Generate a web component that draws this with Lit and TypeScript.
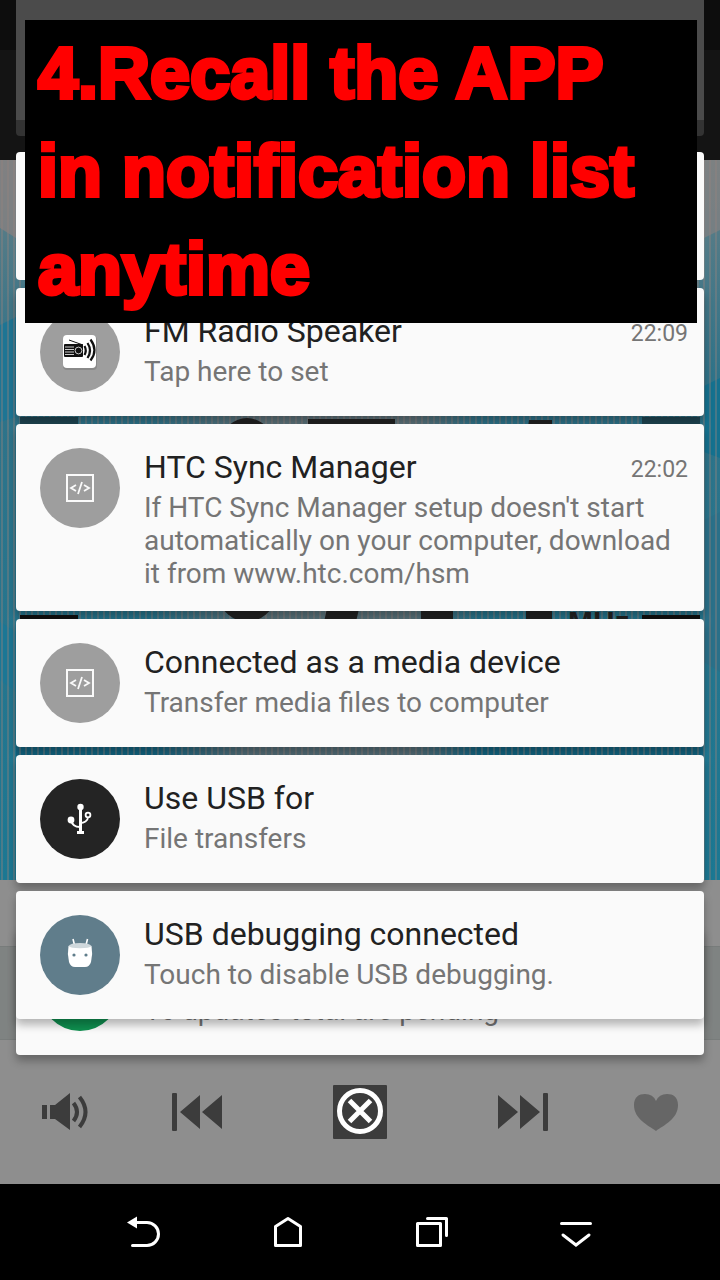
import { LitElement, html, svg, css, nothing } from "lit";
import { customElement, property } from "lit/decorators.js";

const icons: Record<string, unknown> = {
  radio: svg`
    <rect x="23" y="24" width="34" height="34" rx="4" fill="#7d7d7d" opacity=".6"/>
    <rect x="23" y="23" width="33" height="33" rx="4" fill="#fff"/>
    <path d="M29 28l14 5" stroke="#111" stroke-width="1"/>
    <rect x="24" y="32" width="19" height="13" rx="1" fill="#111"/>
    <path d="M25 35h9M25 37.500h9M25 40h9M25 42.500h9" stroke="#ccc" stroke-width="1.200"/>
    <circle cx="38.500" cy="38.500" r="3.400" fill="#111" stroke="#ddd" stroke-width=".9"/>
    <path d="M44.500 34q2.500 4.500 0 9M47.500 31q5 7.500 0 15M50.500 27.500q8 11 0 21" fill="none" stroke="#111" stroke-width="2.200"/>`,
  code: svg`
    <rect x="27" y="27" width="26" height="26" fill="none" stroke="#fafafa" stroke-width="2"/>
    <path d="M36 37l-5 3 5 3M44 37l5 3-5 3M42 34l-4 12" fill="none" stroke="#fafafa" stroke-width="1.800"/>`,
  usb: svg`
    <circle cx="40.500" cy="28" r="3.200" fill="#fff"/>
    <circle cx="31" cy="41" r="3.400" fill="#fff"/>
    <circle cx="48" cy="36" r="2.400" fill="none" stroke="#fff" stroke-width="1.800"/>
    <path d="M40.500 28v26M37 53.500h7" stroke="#fff" stroke-width="3"/>
    <path d="M31 41c1 5 5 7 9 7M48 38c0 4-4 6-8 6" fill="none" stroke="#fff" stroke-width="1.800"/>`,
  android: svg`
    <path d="M33 24l1.500 6M47.500 24l-1.500 6" stroke="#fff" stroke-width="1.600"/>
    <path d="M28.500 31h23q1.500 8-.5 16-1.500 5-6 5H35q-4.500 0-6-5-2-8-.5-16z" fill="#fff"/>
    <path d="M28.500 31q2-3 11.500-3t11.500 3q-2 2.200-11.500 2.200T28.500 31z" fill="#cfd8dc"/>
    <circle cx="34" cy="40" r="1.600" fill="#607d8b"/><circle cx="46" cy="40" r="1.600" fill="#607d8b"/>`,
  update: nothing,
};

@customElement("notice-card")
class NoticeCard extends LitElement {
  @property() icon = "";
  @property() tone = "grey";
  @property() heading = "";
  @property() text = "";
  @property() time = "";

  static styles = css`
    :host { display: block; }
    .card {
      display: flex; gap: 24px; box-sizing: border-box; min-height: 128px;
      padding: 24px 16px 21px 24px; border-radius: 4px; background: #fafafa;
      box-shadow: 0 6px 8px rgba(0, 0, 0, 0.28);
    }
    .badge { flex: none; width: 80px; height: 80px; border-radius: 50%; }
    .grey { background: #9e9e9e; }
    .dark { background: #242424; }
    .slate { background: #607d8b; }
    .green { background: #0f9050; }
    svg { display: block; }
    .body { flex: 1; min-width: 0; }
    .top { display: flex; align-items: center; gap: 16px; height: 38px; margin-bottom: 5px; }
    h2 { flex: 1; margin: 0; font-size: 32px; line-height: 38px; font-weight: 400; color: #212121; }
    time { font-size: 23px; line-height: 38px; padding-top: 6px; color: #757575; }
    p { margin: 0; font-size: 28px; line-height: 33px; color: #757575; }
  `;

  render() {
    return html`<article class="card">
      <div class="badge ${this.tone}">
        <svg width="80" height="80" viewBox="0 0 80 80" aria-hidden="true">${icons[this.icon]}</svg>
      </div>
      <div class="body">
        <div class="top">
          <h2>${this.heading}</h2>
          ${this.time ? html`<time>${this.time}</time>` : nothing}
        </div>
        <p>${this.text}</p>
      </div>
    </article>`;
  }
}

const notices = [
  { icon: "radio", tone: "grey", heading: "FM Radio Speaker", text: "Tap here to set", time: "22:09" },
  { icon: "code", tone: "grey", heading: "HTC Sync Manager", text: "If HTC Sync Manager setup doesn't start automatically on your computer, download it from www.htc.com/hsm", time: "22:02" },
  { icon: "code", tone: "grey", heading: "Connected as a media device", text: "Transfer media files to computer", time: "" },
  { icon: "usb", tone: "dark", heading: "Use USB for", text: "File transfers", time: "" },
  { icon: "android", tone: "slate", heading: "USB debugging connected", text: "Touch to disable USB debugging.", time: "" },
];

@customElement("app-root")
class AppRoot extends LitElement {
  static styles = css`
    :host {
      display: block; position: relative; min-height: 100vh; overflow: hidden;
      background: #000; font-family: Roboto, "Noto Sans", sans-serif;
    }
    .screen { display: flex; flex-direction: column; min-height: 100vh; }
    .status { height: 50px; background: #0d0d0d; }
    .toolbar { height: 110px; background: #141414; }
    .dial { flex: 1; min-height: 720px; overflow: hidden; background: #22718b; }
    .dial svg { display: block; width: 100%; height: 720px; }
    .mhz { font: 700 30px "Liberation Sans Narrow", "Liberation Sans", sans-serif; }
    .strip { height: 66px; background: #8e8e8e; }
    .station { height: 92px; background: #7f8382; border: solid #787c7b; border-width: 1px 0; }
    .controls {
      display: flex; justify-content: space-between; align-items: center;
      height: 144px; padding: 0 40px; background: #8e8e8e;
    }
    .transport { display: flex; gap: 109px; }
    button { display: block; padding: 0; border: 0; background: none; }
    button svg { display: block; }
    .nav {
      display: flex; justify-content: center; align-items: center; gap: 96px;
      box-sizing: border-box; height: 96px; padding-bottom: 4px; background: #000;
    }
    .shade { position: absolute; inset: 0 0 auto; padding: 0 16px; }
    .quick {
      height: 120px; margin-bottom: 16px; border-radius: 0 0 4px 4px;
      background: #4b4b4b; border-bottom: 16px solid #333;
    }
    .list { display: grid; gap: 8px; }
    .blank { height: 128px; border-radius: 4px; background: #fafafa; }
    .stack { position: relative; z-index: 1; }
    .last { margin-top: -100px; }
    .caption {
      position: absolute; z-index: 2; top: 20px; left: 25px; right: 23px; box-sizing: border-box;
      height: 303px; margin: 0; padding: 4px 13px 0; background: #000; color: #f00;
      font: 700 72px/98px "Liberation Sans", Arial, sans-serif;
      -webkit-text-stroke: 4px #f00;
    }
  `;

  dial() {
    return html`<svg viewBox="0 0 720 720" preserveAspectRatio="none" aria-hidden="true">
      <defs>
        <linearGradient id="sea" x1="0" y1="0" x2="0" y2="1">
          <stop offset="0" stop-color="#667f86"/><stop offset=".3" stop-color="#2f7389"/>
          <stop offset="1" stop-color="#1b7893"/>
        </linearGradient>
        <linearGradient id="warm" x1="0" y1="0" x2="1" y2="0">
          <stop offset="0" stop-color="#6f7173" stop-opacity="0"/><stop offset=".3" stop-color="#6f7173"/>
          <stop offset=".8" stop-color="#6f7173"/><stop offset="1" stop-color="#6f7173" stop-opacity="0"/>
        </linearGradient>
        <pattern id="lines" width="6" height="6" patternUnits="userSpaceOnUse">
          <rect x="1" width="2" height="6" fill="#94837d" opacity=".4"/>
        </pattern>
      </defs>
      <rect width="720" height="720" fill="url(#sea)"/>
      <path d="M0 0h16v78L0 68z" fill="#8c8280" opacity=".7"/>
      <path d="M704 0h16v70l-16 8z" fill="#8c8280" opacity=".6"/>
      <path d="M0 165l16-8v100L0 262z" fill="#1d7594"/>
      <path d="M704 226l16-8v80l-16-6z" fill="#14718f"/>
      <path d="M0 462l16 10v60L0 520z" fill="#1b7795"/>
      <path d="M704 360l16-8v160l-16-10z" fill="#2a7089"/>
      <rect x="16" y="584" width="688" height="12" fill="#126582"/>
      <rect x="150" y="250" width="330" height="350" fill="url(#warm)" opacity=".7"/>
      <rect width="720" height="720" fill="url(#lines)"/>
      <path d="M20 257h58v8H20zM642 257h58v8h-58z" fill="#1f4653"/>
      <path d="M20 455h58v5H20zM642 455h58v5h-58z" fill="#111"/>
      <ellipse cx="247" cy="360" rx="50" ry="102" fill="#222"/>
      <path d="M308 259h87v30l-39 173h-32l37-170h-53zM421 430h32v30h-32zM529 260h23v200h-26V280z" fill="#222"/>
      <text class="mhz" x="568" y="472" fill="#222">MHz</text>
    </svg>`;
  }

  render() {
    return html`
      <main class="screen">
        <div class="status"></div>
        <div class="toolbar"></div>
        <div class="dial">${this.dial()}</div>
        <div class="strip"></div>
        <div class="station"></div>
        <div class="controls">
          <button aria-label="Volume"><svg width="48" height="54" viewBox="0 0 48 54" fill="#3c3c3c">
            <path d="M2 20h5v14H2zM10 20h5l15-12v37L15 34h-5z"/>
            <path d="M33.500 18q7 9 0 18M39.500 12q12 15 0 30" fill="none" stroke="#3c3c3c" stroke-width="4"/></svg></button>
          <div class="transport">
            <button aria-label="Previous"><svg width="54" height="54" viewBox="0 0 54 54" fill="#3c3c3c">
              <rect x="2" y="8" width="5" height="38" rx="1"/><path d="M10 27l20-17v34zM32 27l20-17v34z"/></svg></button>
            <button aria-label="Close"><svg width="54" height="54" viewBox="0 0 54 54">
              <rect width="54" height="54" rx="1" fill="#3c3c3c"/>
              <circle cx="27" cy="26" r="20.500" fill="none" stroke="#fff" stroke-width="5"/>
              <path d="M16.500 15.500l21 21M37.500 15.500l-21 21" stroke="#fff" stroke-width="5"/></svg></button>
            <button aria-label="Next"><svg width="54" height="54" viewBox="0 0 54 54" fill="#3c3c3c">
              <rect x="47" y="8" width="5" height="38" rx="1"/><path d="M2 10l20 17L2 44zM24 10l20 17-20 17z"/></svg></button>
          </div>
          <button aria-label="Favourite"><svg width="48" height="54" viewBox="0 0 48 54" fill="#666">
            <path d="M24 46C16 40 2 34 2 20 2 12 7 9 13 9q8 0 11 7 3-7 11-7c6 0 11 3 11 11 0 14-14 20-22 26z"/></svg></button>
        </div>
        <nav class="nav">
          <button aria-label="Back"><svg width="48" height="48" viewBox="0 0 48 48" fill="none" stroke="#fff" stroke-width="3">
            <path d="M14 16.500h13a11.500 11.500 0 0 1 0 23H12.500" stroke-linecap="round"/><path d="M7 16.500l10-6v12z" fill="#fff" stroke="none"/></svg></button>
          <button aria-label="Home"><svg width="48" height="48" viewBox="0 0 48 48" fill="none" stroke="#fff" stroke-width="3" stroke-linejoin="round">
            <path d="M11.500 39.500v-19l12.500-8 12.500 8v19z"/></svg></button>
          <button aria-label="Recent apps"><svg width="48" height="48" viewBox="0 0 48 48" fill="none" stroke="#fff" stroke-width="3" stroke-linejoin="round" stroke-linecap="round">
            <path d="M9.500 17.500h23v22h-23zM19.500 12.500h19v17"/></svg></button>
          <button aria-label="Hide bar"><svg width="48" height="48" viewBox="0 0 48 48" fill="none" stroke="#fff" stroke-width="3" stroke-linecap="round">
            <path d="M9.500 17.500h29M11 29l13 10 13-10"/></svg></button>
        </nav>
      </main>
      <section class="shade">
        <div class="quick"></div>
        <div class="list">
          <div class="blank"></div>
          ${notices.map((n) => html`<notice-card class="stack" .icon=${n.icon} .tone=${n.tone}
            .heading=${n.heading} .text=${n.text} .time=${n.time}></notice-card>`)}
          <notice-card class="last" icon="update" tone="green" text="16 updates total are pending"></notice-card>
        </div>
      </section>
      <h1 class="caption">4.Recall the APP<br>in notification list<br>anytime</h1>
    `;
  }
}
